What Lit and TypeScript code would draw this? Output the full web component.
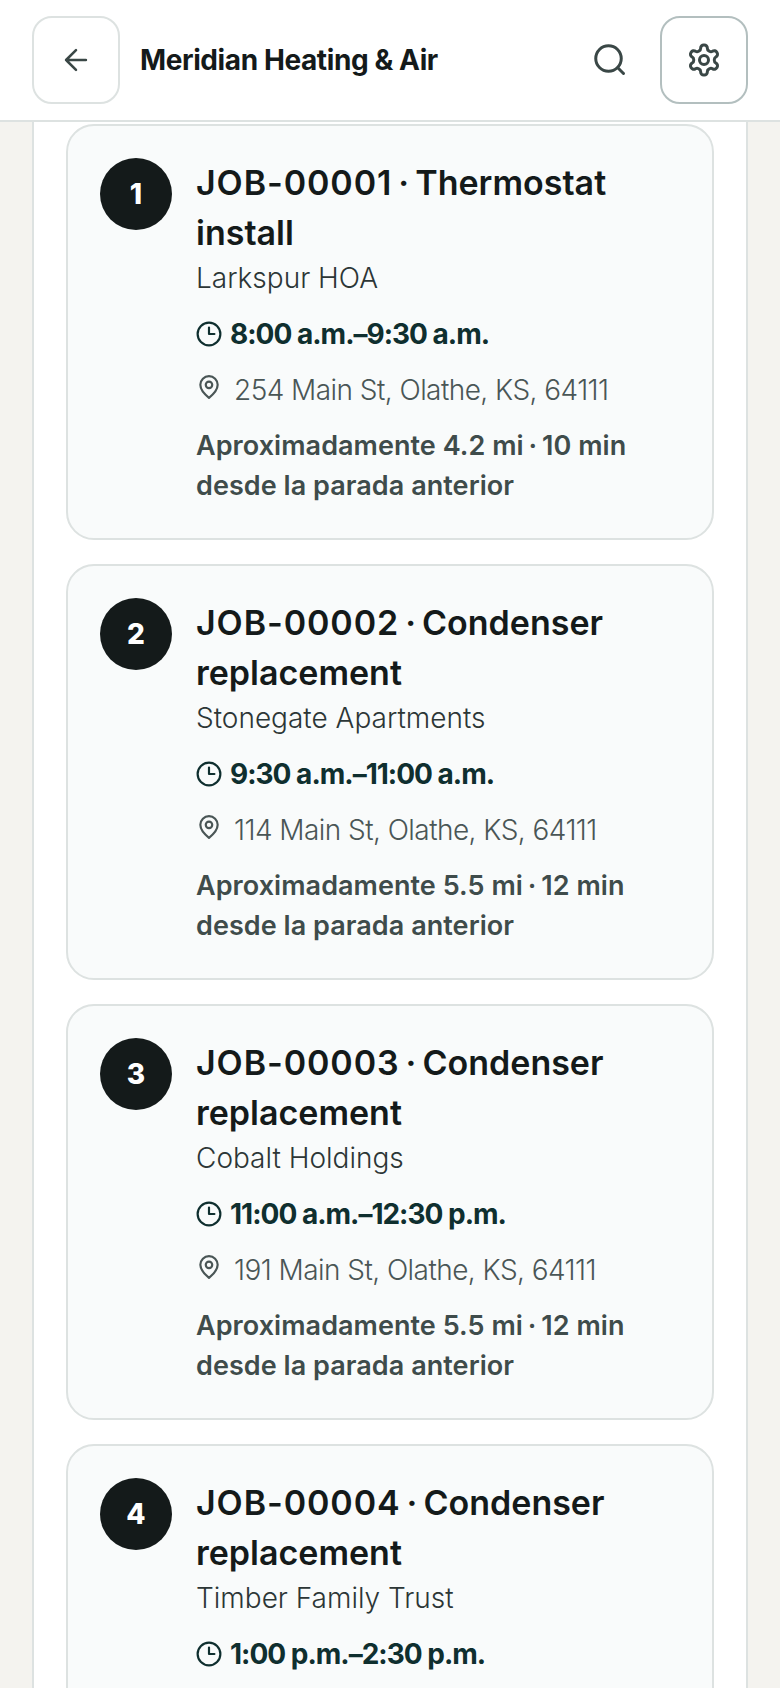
import { LitElement, css, html } from "lit";
import { customElement } from "lit/decorators.js";

type Job = {
  id: string;
  step: number;
  title: string;
  client: string;
  time: string;
  address: string;
  miles: string;
  minutes: string;
};

const jobs: Job[] = [
  { id: "JOB-00001", step: 1, title: "Thermostat install", client: "Larkspur HOA", time: "8:00 a.m.–9:30 a.m.", address: "254 Main St, Olathe, KS, 64111", miles: "4.2 mi", minutes: "10 min" },
  { id: "JOB-00002", step: 2, title: "Condenser replacement", client: "Stonegate Apartments", time: "9:30 a.m.–11:00 a.m.", address: "114 Main St, Olathe, KS, 64111", miles: "5.5 mi", minutes: "12 min" },
  { id: "JOB-00003", step: 3, title: "Condenser replacement", client: "Cobalt Holdings", time: "11:00 a.m.–12:30 p.m.", address: "191 Main St, Olathe, KS, 64111", miles: "5.5 mi", minutes: "12 min" },
  { id: "JOB-00004", step: 4, title: "Condenser replacement", client: "Timber Family Trust", time: "1:00 p.m.–2:30 p.m.", address: "302 Main St, Olathe, KS, 64111", miles: "5.5 mi", minutes: "12 min" },
];

@customElement("app-root")
export class AppRoot extends LitElement {
  static styles = css`
    :host {
      display: block;
      height: 1688px;
      overflow: hidden;
      background: #f4f3ef;
      font-family: Inter, "Liberation Sans", sans-serif;
      color: #141a1a;
    }

    .top {
      display: flex;
      align-items: center;
      gap: 16px;
      height: 120px;
      padding: 0 32px;
      background: #fff;
      border-bottom: 2px solid #dde2e1;
    }

    .icon-btn {
      display: flex;
      align-items: center;
      justify-content: center;
      flex: none;
      width: 88px;
      height: 88px;
      padding: 0;
      box-sizing: border-box;
      border: 2px solid #dde2e1;
      border-radius: 20px;
      background: #fff;
      color: #3a4746;
    }

    .icon-btn.strong {
      border-color: #b3bfbf;
    }

    .search {
      display: flex;
      align-items: center;
      justify-content: center;
      flex: none;
      width: 68px;
      height: 88px;
      color: #3a4746;
    }

    h1 {
      flex: 1;
      margin: 0 0 0 4px;
      font-size: 28px;
      font-weight: 700;
      letter-spacing: -0.4px;
    }

    .sheet {
      display: flex;
      flex-direction: column;
      gap: 24px;
      margin: 0 32px;
      padding: 2px 32px 0;
      background: #fff;
      border-left: 2px solid #dde2e1;
      border-right: 2px solid #dde2e1;
    }

    .card {
      display: flex;
      gap: 24px;
      flex: none;
      padding: 32px;
      background: #f9fbfb;
      border: 2px solid #dde2e1;
      border-radius: 28px;
    }

    .step {
      display: flex;
      align-items: center;
      justify-content: center;
      flex: none;
      width: 72px;
      height: 72px;
      border-radius: 50%;
      background: #141a1a;
      color: #fff;
      font-size: 28px;
      font-weight: 800;
    }

    .body {
      flex: 1;
      min-width: 0;
    }

    h2 {
      margin: 0;
      font-size: 34px;
      line-height: 50px;
      font-weight: 600;
    }

    .job-id {
      letter-spacing: 0.9px;
    }

    h2 .tight {
      word-spacing: -2.5px;
    }

    .client {
      font-size: 28px;
      line-height: 40px;
      font-weight: 300;
      color: #2c3636;
    }

    .time {
      display: flex;
      align-items: center;
      gap: 8px;
      margin-top: 16px;
      font-size: 28px;
      line-height: 40px;
      font-weight: 700;
      letter-spacing: -1px;
      color: #0f2f2f;
    }

    .address {
      display: flex;
      align-items: flex-start;
      gap: 12px;
      margin-top: 16px;
      font-size: 28px;
      line-height: 40px;
      font-weight: 300;
      letter-spacing: -0.55px;
      color: #4a5656;
    }

    .address svg {
      margin-top: 4px;
    }

    .distance {
      margin-top: 16px;
      font-size: 27px;
      line-height: 40px;
      font-weight: 600;
      letter-spacing: 0.05px;
      color: #3f4c4b;
    }

    .tight {
      word-spacing: -2px;
    }

    svg {
      display: block;
      flex: none;
      fill: none;
      stroke: currentColor;
      stroke-linecap: round;
      stroke-linejoin: round;
    }
  `;

  private renderJob(job: Job) {
    return html`
      <article class="card">
        <div class="step">${job.step}</div>
        <div class="body">
          <h2><span class="job-id">${job.id}</span><span class="tight"> · </span>${job.title}</h2>
          <div class="client">${job.client}</div>
          <div class="time">
            <svg width="26" height="26" viewBox="0 0 24 24" stroke-width="2">
              <circle cx="12" cy="12" r="10.5"></circle>
              <path d="M12 6v6h5"></path>
            </svg>
            ${job.time}
          </div>
          <div class="address">
            <svg width="26" height="26" viewBox="0 0 24 24" stroke-width="2">
              <path d="M20 10c0 5-5.5 10-8 12-2.5-2-8-7-8-12a8 8 0 0 1 16 0z"></path>
              <circle cx="12" cy="10" r="3"></circle>
            </svg>
            ${job.address}
          </div>
          <div class="distance">
            Aproximadamente ${job.miles}<span class="tight"> · </span>${job.minutes} desde la parada anterior
          </div>
        </div>
      </article>
    `;
  }

  render() {
    return html`
      <header class="top">
        <button class="icon-btn" aria-label="Volver">
          <svg width="34" height="34" viewBox="0 0 24 24" stroke-width="1.8">
            <path d="M19 12H5M12 19l-7-7 7-7"></path>
          </svg>
        </button>
        <h1>Meridian Heating &amp; Air</h1>
        <div class="search">
          <svg width="36" height="36" viewBox="0 0 24 24" stroke-width="2">
            <circle cx="11" cy="11" r="8.5"></circle>
            <path d="M21 21l-3.8-3.8"></path>
          </svg>
        </div>
        <button class="icon-btn strong" aria-label="Ajustes">
          <svg width="36" height="36" viewBox="0 0 24 24" stroke-width="2">
            <path d="M12.22 2h-.44a2 2 0 0 0-2 2v.18a2 2 0 0 1-1 1.73l-.43.25a2 2 0 0 1-2 0l-.15-.08a2 2 0 0 0-2.73.73l-.22.38a2 2 0 0 0 .73 2.73l.15.1a2 2 0 0 1 1 1.72v.51a2 2 0 0 1-1 1.74l-.15.09a2 2 0 0 0-.73 2.73l.22.38a2 2 0 0 0 2.73.73l.15-.08a2 2 0 0 1 2 0l.43.25a2 2 0 0 1 1 1.73V20a2 2 0 0 0 2 2h.44a2 2 0 0 0 2-2v-.18a2 2 0 0 1 1-1.73l.43-.25a2 2 0 0 1 2 0l.15.08a2 2 0 0 0 2.73-.73l.22-.39a2 2 0 0 0-.73-2.73l-.15-.08a2 2 0 0 1-1-1.74v-.5a2 2 0 0 1 1-1.74l.15-.09a2 2 0 0 0 .73-2.73l-.22-.38a2 2 0 0 0-2.73-.73l-.15.08a2 2 0 0 1-2 0l-.43-.25a2 2 0 0 1-1-1.73V4a2 2 0 0 0-2-2z"></path>
            <circle cx="12" cy="12" r="3"></circle>
          </svg>
        </button>
      </header>
      <main class="sheet">${jobs.map((job) => this.renderJob(job))}</main>
    `;
  }
}
